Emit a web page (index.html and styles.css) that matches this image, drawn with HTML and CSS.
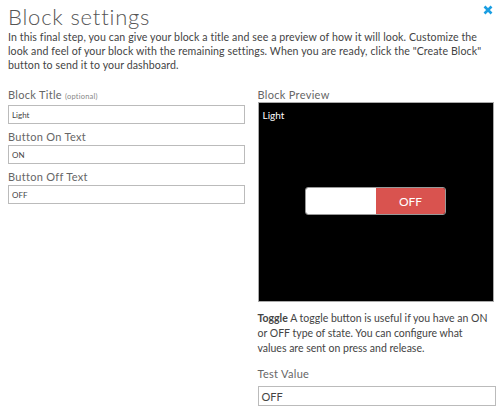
FILE: index.html
```html
<!DOCTYPE html>
<html>
<head>
<meta charset="utf-8">
<link rel="stylesheet" href="styles.css">
</head>
<body>
<div class="dialog">
  <div class="header">
    <h1 class="title">Block settings</h1>
    <svg class="close" width="10" height="10" viewBox="0 0 10 10"><path d="M1.5 1.5 L8.5 8.5 M8.5 1.5 L1.5 8.5" stroke="#1a9ee2" stroke-width="2.6" stroke-linecap="butt"/></svg>
  </div>
  <p class="intro">In this final step, you can give your block a title and see a preview of how it will look. Customize the look and feel of your block with the remaining settings. When you are ready, click the "Create Block" button to send it to your dashboard.</p>
  <div class="columns">
    <div class="col left">
      <div class="field">
        <label class="label">Block Title <span class="opt">(optional)</span></label>
        <div class="input small">Light</div>
      </div>
      <div class="field">
        <label class="label">Button On Text</label>
        <div class="input small">ON</div>
      </div>
      <div class="field">
        <label class="label">Button Off Text</label>
        <div class="input small">OFF</div>
      </div>
    </div>
    <div class="col right">
      <label class="label">Block Preview</label>
      <div class="preview">
        <div class="preview-title">Light</div>
        <div class="preview-body">
          <div class="toggle">
            <div class="toggle-on"></div>
            <div class="toggle-off">OFF</div>
          </div>
        </div>
      </div>
      <p class="desc"><b>Toggle</b> A toggle button is useful if you have an ON or OFF type of state. You can configure what<br>values are sent on press and release.</p>
      <label class="label test">Test Value</label>
      <div class="input large">OFF</div>
    </div>
  </div>
</div>
</body>
</html>
```
FILE: styles.css
```css
html, body {
  margin: 0;
  padding: 0;
  background: #fff;
}
body {
  font-family: "Lato", "Open Sans", sans-serif;
  color: #444;
  width: 500px;
  height: 410px;
  overflow: hidden;
}
.dialog {
  padding: 4px 4px 0 8px;
}
.header {
  display: flex;
  justify-content: space-between;
  align-items: flex-start;
}
.title {
  margin: 0;
  font-size: 22px;
  font-weight: 300;
  line-height: 26px;
  color: #555;
  letter-spacing: 0.8px;
}
.close {
  margin-top: 1px;
  margin-right: 3px;
}
.intro {
  margin: 0;
  font-size: 10.6px;
  line-height: 14px;
  color: #444;
  letter-spacing: 0.1px;
}
.columns {
  display: flex;
  gap: 13px;
  margin-top: 15px;
}
.col {
  display: flex;
  flex-direction: column;
}
.left {
  width: 237px;
}
.right {
  width: 239px;
}
.field {
  display: flex;
  flex-direction: column;
  margin-bottom: 5px;
}
.label {
  font-size: 11px;
  line-height: 15px;
  color: #666;
  letter-spacing: 0.3px;
}
.opt {
  font-size: 7.5px;
  color: #888;
  letter-spacing: 0.2px;
}
.input {
  box-sizing: border-box;
  border: 1px solid #bbb;
  background: #fff;
  display: flex;
  align-items: center;
  padding-left: 3px;
  color: #444;
  margin-top: 1px;
}
.input.small {
  height: 19px;
  font-size: 8px;
}
.input.large {
  height: 20px;
  font-size: 11px;
  margin-top: 5px;
  width: 238px;
}
.preview {
  box-sizing: border-box;
  background: #000;
  border: 1px solid #aaa;
  height: 200px;
  width: 236px;
  display: flex;
  flex-direction: column;
}
.preview-title {
  color: #fff;
  font-size: 10px;
  padding: 6px 0 0 4px;
  line-height: 12px;
}
.preview-body {
  flex: 1;
  display: flex;
  justify-content: center;
  align-items: flex-start;
  padding-top: 66px;
}
.toggle {
  display: flex;
  width: 141px;
  height: 28px;
  border-radius: 3px;
  overflow: hidden;
  border: 1px solid #999;
  box-sizing: border-box;
}
.toggle-on {
  width: 70px;
  background: #fff;
}
.toggle-off {
  flex: 1;
  background: #d9534f;
  color: #fff;
  font-size: 12px;
  display: flex;
  align-items: center;
  justify-content: center;
}
.desc {
  margin: 9px 0 0 0;
  font-size: 10.5px;
  line-height: 15px;
  color: #444;
  letter-spacing: 0;
}
.desc b {
  font-weight: 700;
}
.test {
  margin-top: 10px;
}
```
